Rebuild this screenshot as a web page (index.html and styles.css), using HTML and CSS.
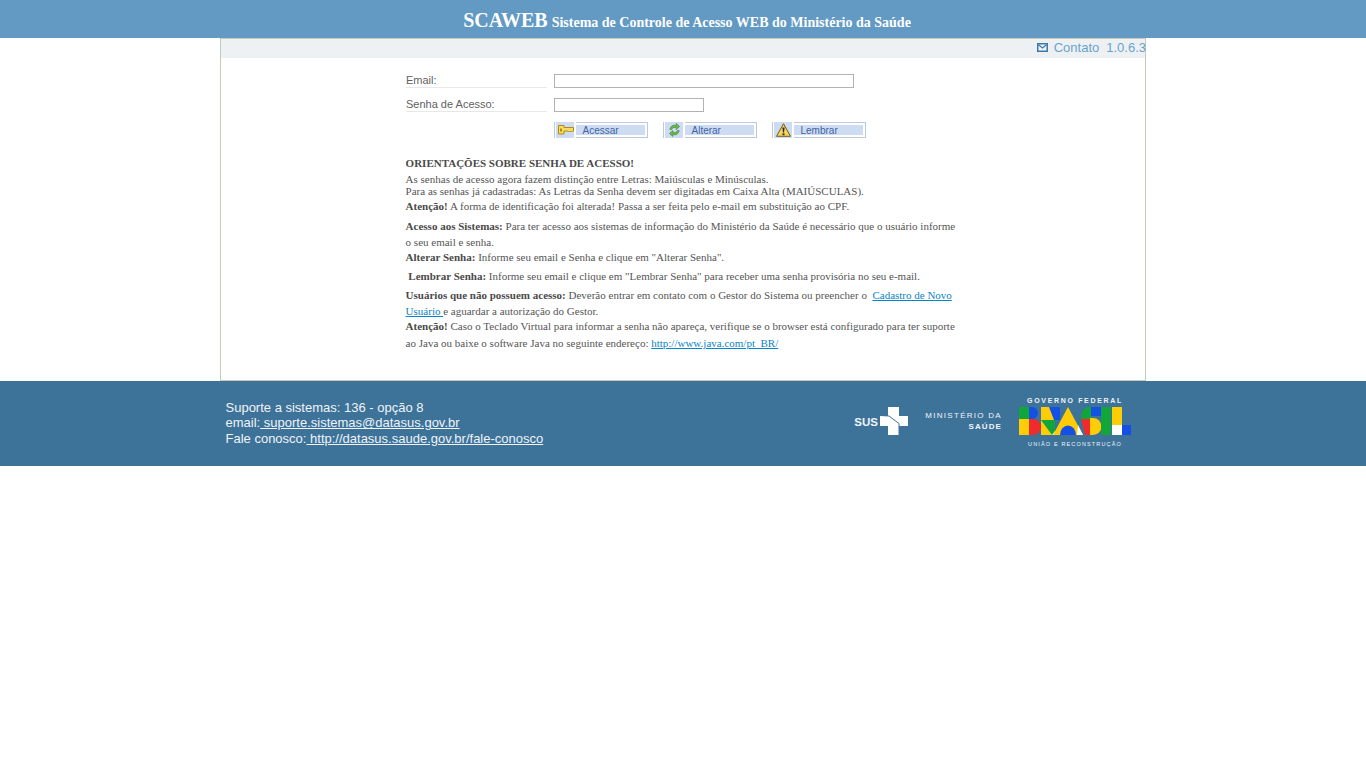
FILE: index.html
```html
<!DOCTYPE html>
<html lang="pt-BR">
<head>
<meta charset="utf-8">
<title>SCAWEB</title>
<link rel="stylesheet" href="styles.css">
</head>
<body>
<header class="top"><span class="brand">SCAWEB</span> <span class="tagline">Sistema de Controle de Acesso WEB do Ministério da Saúde</span></header>
<main class="page">
  <div class="toolbar">
    <svg class="mail" width="11" height="9" viewBox="0 0 11 9"><rect x="0" y="0" width="11" height="9" fill="#3d78a8"/><path d="M1.500 1.500h8v6h-8z" fill="#eef4fa"/><path d="M1.500 1.800 5.500 5l4-3.200" fill="none" stroke="#3d78a8" stroke-width="1.200"/></svg>
    <a class="tool-link">Contato</a><span class="version">1.0.6.3</span>
  </div>
  <div class="content">
    <form class="login">
      <div class="row"><label class="lbl">Email:</label><span class="input wide"></span></div>
      <div class="row"><label class="lbl">Senha de Acesso:</label><span class="input narrow"></span></div>
      <div class="actions">
        <span class="btn"><span class="ico"><svg class="key" width="16" height="10" viewBox="0 0 16 10"><path d="M.5.500h5.500v2h9.500v3.500l-1 1-1-1-1 1-1-1-1 1-1-1H6v3H.5z" fill="#f8dc5c" stroke="#b08a1c"/><rect x="2" y="3.500" width="2" height="3" fill="#b08a1c"/></svg></span><span class="cap-box"><span class="cap">Acessar</span></span></span>
        <span class="btn"><span class="ico"><svg width="11" height="14" viewBox="0 0 13 14" preserveAspectRatio="none"><path d="M1 6.500C1.500 3 5 1.500 8.500 2.500V.5L12.500 3.500l-4 3V4.700C6 4 4 4.700 3 6.500z" fill="#6ab84a" stroke="#2f7d28" stroke-width=".6"/><path d="M12 7.500c-.5 3.500-4 5-7.500 4v2L.5 10.500l4-3v1.800c2.500.7 4.500 0 5.500-1.800z" fill="#6ab84a" stroke="#2f7d28" stroke-width=".6"/></svg></span><span class="cap-box"><span class="cap">Alterar</span></span></span>
        <span class="btn"><span class="ico"><svg width="15" height="14" viewBox="0 0 15 14"><path d="M7.500.7 14.500 13.300H.5z" fill="#f6d35a" stroke="#6f5c22"/><path d="M6.400 4.500h2.200L8 9.500H7z" fill="#2b2b2b"/><rect x="6.500" y="10.400" width="2" height="1.800" fill="#2b2b2b"/></svg></span><span class="cap-box"><span class="cap">Lembrar</span></span></span>
      </div>
    </form>
    <section class="notes">
      <p class="n-title"><b>ORIENTAÇÕES SOBRE SENHA DE ACESSO!</b></p>
      <p class="n-a">As senhas de acesso agora fazem distinção entre Letras: Maiúsculas e Minúsculas.<br>Para as senhas já cadastradas: As Letras da Senha devem ser digitadas em Caixa Alta (MAIÚSCULAS).</p>
      <p class="n-b"><b>Atenção!</b> A forma de identificação foi alterada! Passa a ser feita pelo e-mail em substituição ao CPF.</p>
      <p class="n-c n-first"><b>Acesso aos Sistemas:</b> Para ter acesso aos sistemas de informação do Ministério da Saúde é necessário que o usuário informe o seu email e senha.</p>
      <p class="n-d"><b>Alterar Senha:</b> Informe seu email e Senha e clique em "Alterar Senha".</p>
      <p class="n-e">&nbsp;<b>Lembrar Senha:</b> Informe seu email e clique em "Lembrar Senha" para receber uma senha provisória no seu e-mail.</p>
      <p class="n-c"><b>Usuários que não possuem acesso:</b> Deverão entrar em contato com o Gestor do Sistema ou preencher o &nbsp;<a class="lnk">Cadastro de Novo Usuário </a>e aguardar a autorização do Gestor.</p>
      <p class="n-f"><b>Atenção!</b> Caso o Teclado Virtual para informar a senha não apareça, verifique se o browser está configurado para ter suporte ao Java ou baixe o software Java no seguinte endereço: <a class="lnk">http://www.java.com/pt_BR/</a></p>
    </section>
  </div>
</main>
<footer class="foot">
  <div class="foot-in">
    <div class="contact">
      <div>Suporte a sistemas: 136 - opção 8</div>
      <div>email:<a class="flink"> suporte.sistemas@datasus.gov.br</a></div>
      <div>Fale conosco:<a class="flink"> http://datasus.saude.gov.br/fale-conosco</a></div>
    </div>
    <div class="logos">
      <div class="sus"><span class="sus-t">SUS</span>
        <svg width="28" height="28" viewBox="0 0 28 28"><path d="M8 0h11v9h9v10h-9v9H8v-9H0V9h8z" fill="#fff"/><path d="M0 8.500 9 9l10 7.500V28" fill="none" stroke="#3d7299" stroke-width="1"/></svg>
      </div>
      <div class="ms"><span>MINISTÉRIO DA</span><b>SAÚDE</b></div>
      <div class="gov">
        <span class="gov-t">GOVERNO FEDERAL</span>
        <svg class="brasil" width="112" height="28" viewBox="0 0 112 28">
          <rect x="0" y="0" width="10" height="12" fill="#12a53a"/>
          <path d="M10 0h3a6 6 0 0 1 6 6 6 6 0 0 1-6 6h-3z" fill="#1450e6"/>
          <rect x="0" y="12" width="10" height="16" fill="#ffcd07"/>
          <path d="M10 12h4a8 8 0 0 1 0 16h-4z" fill="#ef2b2d"/>
          <rect x="22" y="0" width="19" height="13" fill="#1450e6"/>
          <path d="M22 0h8l5 13H22z" fill="#ffcd07"/>
          <path d="M35 0a6.500 6.500 0 0 1 6 6.500A6.500 6.500 0 0 1 35 13z" fill="#1450e6"/>
          <path d="M34 0h7v1a6 6 0 0 0-7-1z" fill="#3d7299"/>
          <rect x="22" y="13" width="14" height="15" fill="#12a53a"/>
          <path d="M22 13l11 15H22z" fill="#ffcd07"/>
          <path d="M36 24l-3 4h6z" fill="#fff"/>
          <path d="M49 0l15 28H34z" fill="#ffcd07"/>
          <path d="M41 28a8 9.500 0 0 1 16 0z" fill="#1450e6"/>
          <path d="M59 18l5 10h-6z" fill="#fff"/>
          <path d="M62 12h9v16h-5z" fill="#ef2b2d"/>
          <path d="M62 12a8 12 0 0 1 10-12v12z" fill="#12a53a"/>
          <rect x="72" y="0" width="10" height="9" fill="#1450e6"/>
          <path d="M71 11h3a8.500 8.500 0 0 1 0 17h-3z" fill="#ffcd07"/>
          <rect x="82" y="0" width="10" height="28" fill="#12a53a"/>
          <rect x="93" y="0" width="10" height="18" fill="#ffcd07"/>
          <rect x="93" y="18" width="10" height="10" fill="#fff"/>
          <rect x="103" y="18" width="9" height="10" fill="#1450e6"/>
        </svg>
        <span class="gov-b">UNIÃO E RECONSTRUÇÃO</span>
      </div>
    </div>
  </div>
</footer>
</body>
</html>
```
FILE: styles.css
```css
* { box-sizing: border-box; }
html, body { margin: 0; padding: 0; background: #fff; }
body { font-family: "Liberation Sans", Arial, sans-serif; }
.top { height: 38px; background: #629ac4; color: #fff; text-align: center; font-family: "Liberation Serif", serif; font-weight: bold; padding: 8px 0 0 8px; line-height: 24px; white-space: nowrap; }
.brand { font-size: 20px; }
.tagline { font-size: 14px; }
.page { width: 926px; height: 343px; margin-left: 220px; border: 1px solid #c9c9bb; }
.toolbar { height: 19px; padding-bottom: 2px; background: #eef1f4; display: flex; justify-content: flex-end; align-items: center; font-size: 13px; color: #68a3cc; }
.mail { margin-right: 6px; }
.tool-link { margin-right: 7px; }
.version { margin-right: -1px; }
.content { padding: 6px 0 0 185px; }
.login { width: 480px; }
.row { display: flex; align-items: flex-end; height: 24px; }
.lbl { width: 141px; margin-right: 7px; height: 16px; line-height: 16px; font-size: 11px; color: #5f5f5f; border-bottom: 1px solid #e8e8e8; }
.input { display: block; height: 14px; border: 1px solid #b2b2b2; background: #fff; }
.wide { width: 300px; }
.narrow { width: 150px; }
.actions { display: flex; gap: 15px; margin: 10px 0 0 148px; }
.btn { width: 94px; height: 16px; border-left: 1px solid #bccad9; display: flex; background: #fff; }
.ico { width: 18px; height: 16px; background: #cedcf3; margin: 0 2px 0 1px; display: flex; align-items: center; justify-content: center; flex: none; }
.key { margin-left: 2px; }
.cap-box { flex: 1; display: flex; border: 1px solid #bccad9; border-left: 0; padding: 2px 2px 2px 0; }
.cap { flex: 1; background: #cedcf3; color: #3c64a5; font-size: 10px; line-height: 11px; padding-left: 6.500px; overflow: hidden; }
.notes { width: 552px; margin: 19px 0 0 -0.400px; font-family: "Liberation Serif", serif; font-size: 11px; color: #555; }
.notes p { margin: 0; }
.notes b { color: #4a4a4a; }
.notes .n-title { line-height: 13px; }
.notes .n-a { margin-top: 3px; line-height: 12px; }
.notes .n-b { margin-top: 2px; line-height: 14px; }
.notes .n-c { margin-top: 4px; line-height: 16px; }
.notes .n-first { margin-top: 5px; }
.notes .n-d { line-height: 14px; }
.notes .n-e { margin-top: 5px; line-height: 14px; }
.notes .n-f { margin-top: -1px; line-height: 17px; }
.lnk { color: #0a84c8; text-decoration: underline; }
.foot { height: 85px; background: #3d7299; color: #f0f4f8; }
.foot-in { width: 926px; margin-left: 220px; display: flex; justify-content: space-between; padding: 18.900px 15px 0 5.500px; }
.contact { font-size: 13px; line-height: 15.500px; }
.flink { text-decoration: underline; }
.logos { display: flex; align-items: flex-start; }
.sus { display: flex; align-items: center; margin-top: 7.100px; }
.sus-t { font-size: 11.500px; font-weight: bold; margin-right: 2px; padding-top: 3px; }
.ms { display: flex; flex-direction: column; align-items: flex-end; width: 76px; margin: 10px 18px 0 17px; font-size: 8px; letter-spacing: 1.280px; line-height: 11px; }
.ms span { margin-right: -1px; white-space: nowrap; }
.ms b { letter-spacing: 1.100px; margin-right: -1px; white-space: nowrap; }
.gov { width: 112px; display: flex; flex-direction: column; align-items: center; margin-top: -3.400px; }
.gov-t { font-size: 7px; font-weight: bold; letter-spacing: 1.670px; line-height: 8px; margin-bottom: 2.500px; white-space: nowrap; }
.gov-b { font-size: 5.500px; letter-spacing: 1.150px; line-height: 8px; margin-top: 5px; white-space: nowrap; }
.brasil { display: block; }
```
